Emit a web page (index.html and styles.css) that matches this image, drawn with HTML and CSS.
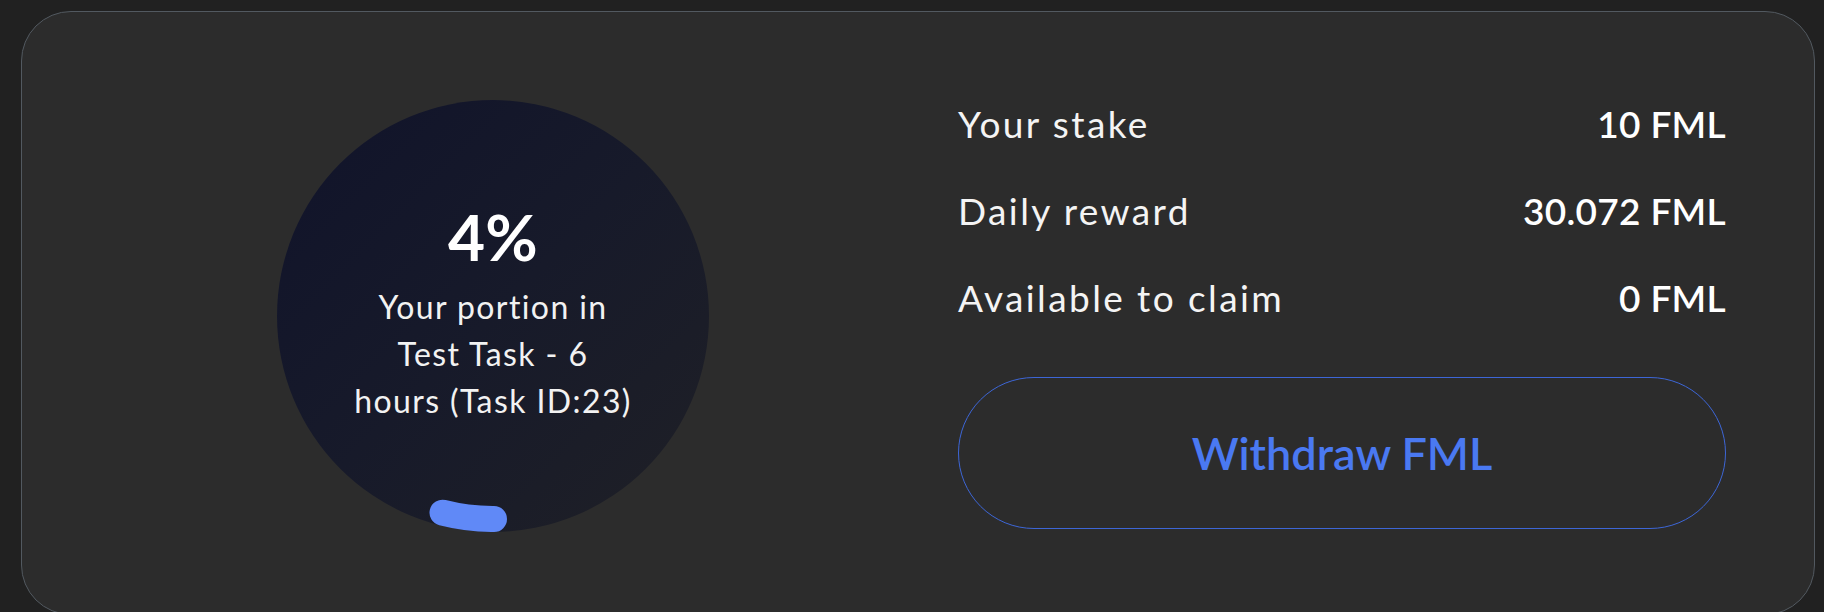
FILE: index.html
```html
<!DOCTYPE html>
<html lang="en">
<head>
<meta charset="utf-8">
<title>Stake</title>
<link rel="stylesheet" href="styles.css">
</head>
<body>
<div class="page">
  <section class="card">
    <div class="portion">
      <svg class="portion-arc" viewBox="0 0 432 432" width="432" height="432" aria-hidden="true">
        <path d="M 217 419 A 203 203 0 0 1 165.5 412.7" fill="none" stroke="#6089f7" stroke-width="26" stroke-linecap="round"/>
      </svg>
      <div class="portion-text">
        <div class="portion-value">4%</div>
        <div class="portion-label">Your portion in<br>Test Task - 6<br>hours (Task ID:23)</div>
      </div>
    </div>
    <div class="details">
      <div class="rows">
        <div class="row"><span class="label">Your stake</span><span class="value">10 FML</span></div>
        <div class="row"><span class="label">Daily reward</span><span class="value">30.072 FML</span></div>
        <div class="row"><span class="label">Available to claim</span><span class="value">0 FML</span></div>
      </div>
      <button class="withdraw" type="button">Withdraw FML</button>
    </div>
  </section>
</div>
</body>
</html>
```

FILE: styles.css
```css
* { box-sizing: border-box; }

html, body {
  margin: 0;
  padding: 0;
  background: #212121;
  height: 100%;
  overflow: hidden;
}

body {
  font-family: "Lato", "Liberation Sans", sans-serif;
  color: #ffffff;
}

.page {
  padding: 11px 0 0 21px;
}

.card {
  width: 1794px;
  height: 604px;
  background: #2c2c2c;
  border: 1.5px solid #525960;
  border-radius: 50px;
  display: flex;
  align-items: center;
  padding: 5px 88px 0 255px;
  gap: 249px;
}

.portion {
  position: relative;
  flex: 0 0 432px;
  width: 432px;
  height: 432px;
  border-radius: 50%;
  background: linear-gradient(135deg, #10132a 0%, #171a2a 50%, #1f2026 100%);
  display: flex;
  align-items: center;
  justify-content: center;
  padding-bottom: 4px;
}

.portion-arc {
  position: absolute;
  left: 0;
  top: 0;
}

.portion-text {
  text-align: center;
  position: relative;
}

.portion-value {
  font-size: 64px;
  font-weight: 700;
  line-height: 1;
  letter-spacing: 0.3px;
  margin-top: 2px;
}

.portion-label {
  margin-top: 14px;
  font-size: 32px;
  line-height: 47px;
  letter-spacing: 1.4px;
  color: #f2f2f2;
}

.details {
  flex: 0 0 768px;
  width: 768px;
  display: flex;
  flex-direction: column;
}

.rows {
  display: flex;
  flex-direction: column;
  gap: 43px;
}

.row {
  display: flex;
  justify-content: space-between;
  align-items: baseline;
  font-size: 37px;
  line-height: 44px;
}

.label {
  color: #f4f4f4;
  letter-spacing: 2.4px;
}

.value {
  font-weight: 600;
  letter-spacing: 0.3px;
}

.withdraw {
  margin-top: 57px;
  height: 152px;
  width: 100%;
  border: 1px solid #3d66d6;
  border-radius: 76px;
  background: transparent;
  color: #4a79f2;
  font-family: "Lato", "Liberation Sans", sans-serif;
  font-size: 45px;
  font-weight: 600;
  letter-spacing: 0;
  padding: 0;
  cursor: pointer;
}
```
